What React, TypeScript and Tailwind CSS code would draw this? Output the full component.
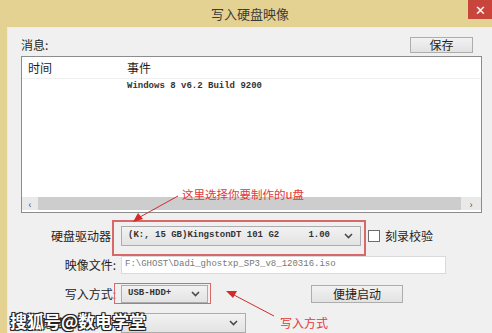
import React from 'react';

const mono = "font-['Liberation_Mono','DejaVu_Sans_Mono',monospace]";

function Chevron() {
  return (
    <svg width="9" height="6" viewBox="0 0 9 6" className="shrink-0">
      <path d="M1 1 L4.5 4.5 L8 1" fill="none" stroke="#4a4a4a" strokeWidth="1.6" />
    </svg>
  );
}

function Combo({ className, children }: { className: string; children: React.ReactNode }) {
  return (
    <div
      className={`flex items-center justify-between border border-[#acacac] bg-gradient-to-b from-[#f2f2f2] to-[#e3e3e3] pl-[6px] pr-[7px] ${className}`}
    >
      {children}
      <Chevron />
    </div>
  );
}

export default function App() {
  return (
    <div className="relative w-[492px] h-[333px] overflow-hidden bg-[#e4d292] font-['Noto_Sans_CJK_SC',sans-serif] text-[12px] text-[#1e1e1e]">
      {/* title bar */}
      <div className="h-[27px] flex items-center justify-center pl-[8px] text-[13px] text-[#3b3b3b]">
        写入硬盘映像
      </div>
      <div className="absolute right-0 top-0 w-[24px] h-[19px] bg-[#c8453c] flex items-center justify-center text-white text-[13px] leading-none">
        ✕
      </div>

      {/* client area */}
      <div className="ml-[7px] h-[306px] bg-[#f0f0f0] border-l border-t border-[#f6edc8]">
        <div className="flex items-center justify-between pt-[9px] pl-[13px] pr-[19px] h-[25px]">
          <span className="leading-none">消息:</span>
          <button className="w-[63px] h-[16px] border border-[#adadad] bg-gradient-to-b from-[#f2f2f2] to-[#e2e2e2] text-[12px] leading-none flex items-center justify-center">
            保存
          </button>
        </div>

        {/* message list */}
        <div className="mt-[3px] ml-[13px] mr-[10px] h-[157px] border border-[#8c8c8c] bg-white flex flex-col">
          <div className="h-[22px] flex items-center border-b border-[#f0f0f0] text-[12px]">
            <span className="w-[105px] pl-[6px]">时间</span>
            <span>事件</span>
          </div>
          <div className="h-[16px] flex items-center">
            <span className="w-[105px]" />
            <span className={`${mono} text-[9px] font-bold text-[#333]`}>Windows 8 v6.2 Build 9200</span>
          </div>
          <div className="flex-1" />
          <div className="h-[13px] mb-[2px] flex items-center bg-[#e9e9e9] text-[#555] text-[10px]">
            <span className="w-[16px] text-center leading-none">‹</span>
            <div className="flex-1 h-full bg-[#cdcdcd]" />
            <span className="w-[20px] text-center leading-none">›</span>
          </div>
        </div>

        {/* form */}
        <div className="mt-[13px] flex flex-col">
          <div className="flex items-center h-[20px]">
            <span className="w-[108px] text-right pr-[5px]">硬盘驱动器</span>
            <Combo className="ml-[5px] w-[240px] h-[20px]">
              <span className={`${mono} text-[9px] font-bold text-[#333] flex-1 flex justify-between pr-[14px]`}>
                <span>(K:, 15 GB)KingstonDT 101 G2</span>
                <span>1.00</span>
              </span>
            </Combo>
            <span className="ml-[7px] w-[12px] h-[12px] border border-[#6e6e6e] bg-white" />
            <span className="ml-[5px]">刻录校验</span>
          </div>

          <div className="flex items-center h-[18px] mt-[10px]">
            <span className="w-[108px] text-right">映像文件:</span>
            <div className="ml-[5px] w-[325px] h-[18px] border border-[#dadada] bg-white flex items-center pl-[3px]">
              <span className={`${mono} text-[9px] text-[#777]`}>F:\GHOST\Dadi_ghostxp_SP3_v8_120316.iso</span>
            </div>
          </div>

          <div className="flex items-center h-[18px] mt-[11px]">
            <span className="w-[108px] text-right">写入方式:</span>
            <Combo className="ml-[5px] w-[87px] h-[18px]">
              <span className={`${mono} text-[9px] font-bold text-[#333]`}>USB-HDD+</span>
            </Combo>
            <button className="ml-[103px] w-[92px] h-[18px] border border-[#adadad] bg-gradient-to-b from-[#f2f2f2] to-[#e2e2e2] text-[12px] leading-none flex items-center justify-center">
              便捷启动
            </button>
          </div>

          <div className="flex items-center h-[20px] mt-[10px]">
            <span className="w-[108px] text-right">隐藏启动分区:</span>
            <Combo className="ml-[5px] w-[125px] h-[20px]">
              <span className="text-[12px]">无</span>
            </Combo>
          </div>
        </div>
      </div>

      {/* annotations */}
      <div className="absolute left-[112px] top-[220px] w-[254px] h-[36px] border-2 border-[#d9686b]" />
      <div className="absolute left-[114px] top-[283px] w-[97px] h-[21px] border border-[#d9686b]" />
      <svg className="absolute left-0 top-0" width="492" height="333">
        <line x1="178" y1="196" x2="140" y2="217" stroke="#c9302f" strokeWidth="1" />
        <path d="M133 222 L138 213 L143 219 Z" fill="#d62a2a" />
        <line x1="274" y1="316" x2="234" y2="295" stroke="#c9302f" strokeWidth="1" />
        <path d="M226 291 L237 291 L233 298 Z" fill="#d62a2a" />
      </svg>
      <span className="absolute left-[182px] top-[189px] text-[11.5px] text-[#e0393b] leading-none">
        这里选择你要制作的u盘
      </span>
      <span className="absolute left-[280px] top-[317px] text-[12px] text-[#e0393b] leading-none">
        写入方式
      </span>
      <span className="absolute left-[10px] top-[312px] text-[17px] font-bold text-white leading-none [text-shadow:-1px_-1px_0_#222,1px_-1px_0_#222,-1px_1px_0_#222,1px_1px_0_#222,0_0_2px_#000]">
        搜狐号@数电学堂
      </span>
    </div>
  );
}
